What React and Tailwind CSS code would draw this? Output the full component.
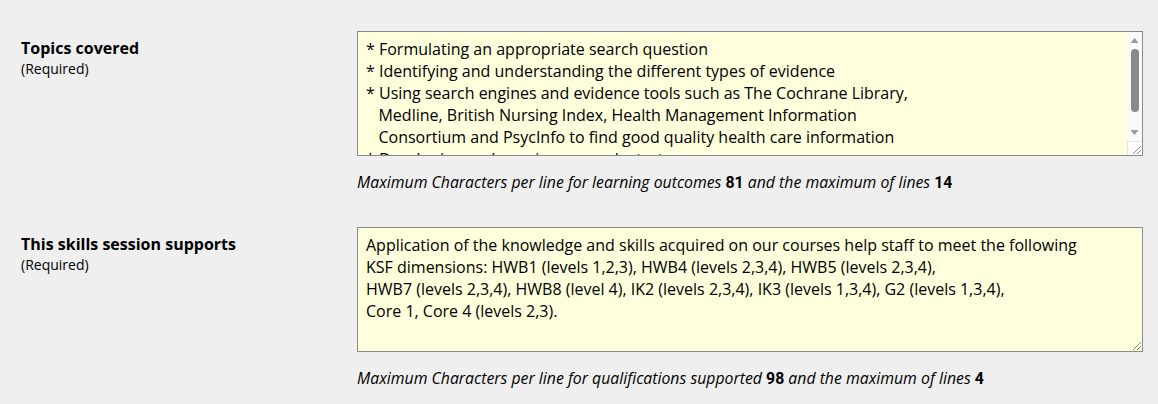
import React from 'react'

const topics = `* Formulating an appropriate search question
* Identifying and understanding the different types of evidence
* Using search engines and evidence tools such as The Cochrane Library,
   Medline, British Nursing Index, Health Management Information
   Consortium and PsycInfo to find good quality health care information
* Developing and running a search strategy
* Appraising the evidence`

const supports = `Application of the knowledge and skills acquired on our courses help staff to meet the following
KSF dimensions: HWB1 (levels 1,2,3), HWB4 (levels 2,3,4), HWB5 (levels 2,3,4),
HWB7 (levels 2,3,4), HWB8 (level 4), IK2 (levels 2,3,4), IK3 (levels 1,3,4), G2 (levels 1,3,4),
Core 1, Core 4 (levels 2,3).`

function ResizeGrip() {
  return (
    <svg width="14" height="14" viewBox="0 0 14 14" className="absolute right-0 bottom-0 pointer-events-none">
      <line x1="5" y1="13" x2="13" y2="5" stroke="#888" strokeWidth="1" />
      <line x1="9" y1="13" x2="13" y2="9" stroke="#888" strokeWidth="1" />
    </svg>
  )
}

function Scrollbar() {
  return (
    <div className="absolute top-[1px] right-[1px] bottom-[1px] w-[15px] bg-[#fafafa] flex flex-col items-center pointer-events-none">
      <svg width="15" height="17" viewBox="0 0 15 17">
        <path d="M3.5 11 L7.5 6 L11.5 11 Z" fill="#9a9a9a" />
      </svg>
      <div className="w-[8px] h-[63px] rounded-full bg-[#8a8a8a]" />
      <div className="flex-1" />
      <svg width="15" height="17" viewBox="0 0 15 17">
        <path d="M3.5 6 L7.5 11 L11.5 6 Z" fill="#9a9a9a" />
      </svg>
      <div className="h-[14px] w-[15px] border-t border-l border-[#e3e3e3] bg-white relative">
        <ResizeGrip />
      </div>
    </div>
  )
}

function Field({ label, value, note, num1, num2, scroll }) {
  return (
    <div className="flex">
      <div className="w-[357px] pl-[21px] pt-[7px] shrink-0">
        <div className="text-[16px] font-bold leading-[20px] text-black">{label}</div>
        <div className="text-[14px] leading-[20px] text-black mt-[1px]">(Required)</div>
      </div>
      <div className="flex flex-col">
        <div className="relative w-[786px] h-[125px]">
          <textarea
            readOnly
            defaultValue={value}
            className="w-full h-full bg-[#ffffdd] border border-[#8a8a8a] px-[8px] pt-[6px] text-[16px] leading-[22px] text-black whitespace-pre outline-none resize-none overflow-hidden"
            style={{ fontFamily: '"Open Sans", sans-serif' }}
          />
          {scroll ? <Scrollbar /> : <div className="absolute right-[1px] bottom-[1px] w-[14px] h-[14px] pointer-events-none"><ResizeGrip /></div>}
        </div>
        <div className="mt-[15px] text-[17px] italic text-black leading-[22px] whitespace-nowrap origin-left scale-x-[0.93]">
          {note} <span className="font-bold not-italic" style={{ fontFamily: 'Roboto, sans-serif' }}>{num1}</span> and the maximum of lines <span className="font-bold not-italic" style={{ fontFamily: 'Roboto, sans-serif' }}>{num2}</span>
        </div>
      </div>
    </div>
  )
}

export default function App() {
  return (
    <div className="w-[1158px] h-[404px] bg-[#efefef] pt-[31px] overflow-hidden" style={{ fontFamily: '"Open Sans", sans-serif' }}>
      <Field
        label="Topics covered"
        value={topics}
        note="Maximum Characters per line for learning outcomes"
        num1="81"
        num2="14"
        scroll
      />
      <div className="h-[34px]" />
      <Field
        label="This skills session supports"
        value={supports}
        note="Maximum Characters per line for qualifications supported"
        num1="98"
        num2="4"
      />
    </div>
  )
}
